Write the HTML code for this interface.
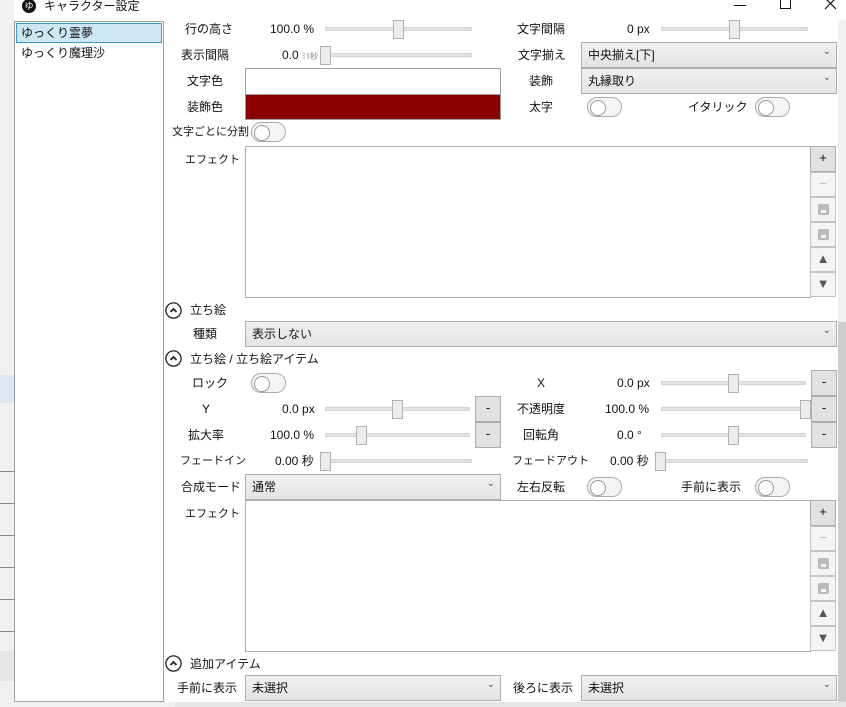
<!DOCTYPE html>
<html><head><meta charset="utf-8">
<style>
*{box-sizing:border-box;margin:0;padding:0}
body{width:846px;height:707px;overflow:hidden;background:#fff;position:relative;font-family:"Liberation Sans","Noto Sans CJK JP",sans-serif;font-size:12px;color:#111}
.a{position:absolute}
.l{position:absolute;line-height:14px;white-space:nowrap}
.tr{position:absolute;height:4px;background:#e2e2e2;border:1px solid #d4d4d4}
.th{position:absolute;width:11px;height:19px;background:#ececec;border:1px solid #b0b0b0}
.cb{position:absolute;height:26px;background:linear-gradient(#f0f0f0,#e4e4e4);border:1px solid #acacac;padding:4px 6px;line-height:16px}
.cb:after{content:"⌄";position:absolute;right:5px;top:1px;font-size:10px;color:#555}
.tg{position:absolute;width:35px;height:20px;border:1px solid #aaa;border-radius:10px;background:#f4f4f4}
.tg:before{content:"";position:absolute;left:2px;top:2px;width:14px;height:14px;border-radius:50%;background:#fff;border:1px solid #999}
.bt{position:absolute;width:26px;height:26px;background:#e1e1e1;border:1px solid #adadad;text-align:center;line-height:22px;font-size:13px}
.bx{position:absolute;border:1px solid #acacac;background:#fff}
.ex{position:absolute;width:17px;height:17px}
.sb{position:absolute;width:26px;height:25px;border:1px solid #c4c4c4;background:#f4f4f4;text-align:center;line-height:22px;color:#bbb;font-size:13px}
.sv{position:absolute;left:7px;top:6px;width:11px;height:11px;background:#bbb;border-radius:1px}
.sv:after{content:"";position:absolute;left:3px;top:6px;width:5px;height:3px;background:#f4f4f4}
</style></head><body>
<div class="a" style="left:0;top:0;width:14px;height:707px;background:#f0f0f0"></div>
<div class="a" style="left:0;top:375px;width:14px;height:28px;background:#dde6f0"></div>
<div class="a" style="left:0;top:471px;width:14px;height:1px;background:#888"></div>
<div class="a" style="left:0;top:503px;width:14px;height:1px;background:#888"></div>
<div class="a" style="left:0;top:535px;width:14px;height:1px;background:#888"></div>
<div class="a" style="left:0;top:567px;width:14px;height:1px;background:#888"></div>
<div class="a" style="left:0;top:599px;width:14px;height:1px;background:#888"></div>
<div class="a" style="left:0;top:631px;width:14px;height:1px;background:#888"></div>
<div class="a" style="left:0;top:651px;width:14px;height:30px;background:#e6e6e6"></div>
<div class="a" style="left:0;top:702px;width:846px;height:5px;background:#f0f0f0"></div>
<div class="a" style="left:175px;top:702px;width:671px;height:5px;background:#e4e4e4"></div>
<div class="a" style="left:14px;top:0;width:832px;height:20px;background:#fff"></div>
<div class="a" style="left:22px;top:-1px;width:14px;height:14px;border-radius:50%;background:#111;color:#fff;font-size:9px;text-align:center;line-height:14px">ゆ</div>
<div class="l" style="left:44px;top:-1px">キャラクター設定</div>
<div class="a" style="left:734px;top:5px;width:12px;height:1px;background:#111"></div>
<div class="a" style="left:780px;top:-1px;width:11px;height:10px;border:1px solid #111"></div>
<svg class="a" style="left:824px;top:-2px" width="13" height="12"><path d="M1 0 L12 11 M12 0 L1 11" stroke="#111" stroke-width="1.2"/></svg>
<div class="a" style="left:14px;top:21px;width:150px;height:681px;border:1px solid #a0a0a0;background:#fff"></div>
<div class="a" style="left:16px;top:23px;width:146px;height:20px;background:#cce8f5;border:1px solid #3c9ad8"></div>
<div class="l" style="left:21px;top:26px">ゆっくり霊夢</div>
<div class="l" style="left:21px;top:46px">ゆっくり魔理沙</div>
<div class="a" style="left:838px;top:20px;width:8px;height:682px;background:#f0f0f0"></div>
<div class="a" style="left:838px;top:322px;width:8px;height:380px;background:#cdcdcd"></div>

<div class="l" style="left:185px;top:22px">行の高さ</div>
<div class="l" style="left:270px;top:22px">100.0 %</div>
<div class="tr" style="left:325px;top:27px;width:147px"></div><div class="th" style="left:393px;top:20px"></div>
<div class="l" style="left:517px;top:22px">文字間隔</div>
<div class="l" style="left:627px;top:22px">0 px</div>
<div class="tr" style="left:661px;top:27px;width:147px"></div><div class="th" style="left:729px;top:20px"></div>
<div class="l" style="left:181px;top:48px">表示間隔</div>
<div class="l" style="left:282px;top:48px">0.0 <span style="font-size:8px;color:#888">ﾐﾘ秒</span></div>
<div class="tr" style="left:320px;top:53px;width:152px"></div><div class="th" style="left:320px;top:46px"></div>
<div class="l" style="left:518px;top:48px">文字揃え</div>
<div class="cb" style="left:581px;top:42px;width:256px">中央揃え[下]</div>
<div class="l" style="left:187px;top:74px">文字色</div>
<div class="a" style="left:245px;top:68px;width:256px;height:27px;border:1px solid #a0a0a0;background:#fff"></div>
<div class="l" style="left:187px;top:100px">装飾色</div>
<div class="a" style="left:245px;top:94px;width:256px;height:26px;border:1px solid #a0a0a0;background:#8b0000"></div>
<div class="l" style="left:529px;top:74px">装飾</div>
<div class="cb" style="left:581px;top:68px;width:256px">丸縁取り</div>
<div class="l" style="left:529px;top:100px">太字</div>
<div class="tg" style="left:587px;top:97px"></div>
<div class="l" style="left:688px;top:100px">イタリック</div>
<div class="tg" style="left:755px;top:97px"></div>
<div class="l" style="left:172px;top:125px;font-size:11px">文字ごとに分割</div>
<div class="tg" style="left:251px;top:122px"></div>
<div class="l" style="left:185px;top:153px;font-size:11px">エフェクト</div>
<div class="bx" style="left:245px;top:146px;width:566px;height:152px"></div>
<div class="bt" style="left:810px;top:146px;height:26px">+</div>
<div class="sb" style="left:810px;top:172px">−</div>
<div class="sb" style="left:810px;top:197px"><div class="sv"></div></div>
<div class="sb" style="left:810px;top:222px"><div class="sv"></div></div>
<div class="sb" style="left:810px;top:247px;color:#555">▲</div>
<div class="sb" style="left:810px;top:272px;color:#555">▼</div>
<svg class="ex" style="left:165px;top:302px" viewBox="0 0 17 17"><circle cx="8.5" cy="8.5" r="7.6" fill="none" stroke="#222" stroke-width="1.3"/><path d="M5.5 10 L8.5 7 L11.5 10" fill="none" stroke="#222" stroke-width="1.8"/></svg>
<div class="l" style="left:190px;top:303px">立ち絵</div>
<div class="l" style="left:193px;top:327px">種類</div>
<div class="cb" style="left:245px;top:321px;width:592px">表示しない</div>
<svg class="ex" style="left:165px;top:350px" viewBox="0 0 17 17"><circle cx="8.5" cy="8.5" r="7.6" fill="none" stroke="#222" stroke-width="1.3"/><path d="M5.5 10 L8.5 7 L11.5 10" fill="none" stroke="#222" stroke-width="1.8"/></svg>
<div class="l" style="left:190px;top:352px">立ち絵 / 立ち絵アイテム</div>
<div class="l" style="left:192px;top:376px">ロック</div>
<div class="tg" style="left:251px;top:373px"></div>
<div class="l" style="left:537px;top:376px">X</div>
<div class="l" style="left:617px;top:376px">0.0 px</div>
<div class="tr" style="left:661px;top:381px;width:145px"></div><div class="th" style="left:728px;top:374px"></div>
<div class="bt" style="left:811px;top:370px">-</div>
<div class="l" style="left:202px;top:402px">Y</div>
<div class="l" style="left:282px;top:402px">0.0 px</div>
<div class="tr" style="left:325px;top:407px;width:145px"></div><div class="th" style="left:392px;top:400px"></div>
<div class="bt" style="left:475px;top:396px">-</div>
<div class="l" style="left:517px;top:402px">不透明度</div>
<div class="l" style="left:605px;top:402px">100.0 %</div>
<div class="tr" style="left:661px;top:407px;width:145px"></div><div class="th" style="left:800px;top:400px"></div>
<div class="bt" style="left:811px;top:396px">-</div>
<div class="l" style="left:188px;top:428px">拡大率</div>
<div class="l" style="left:270px;top:428px">100.0 %</div>
<div class="tr" style="left:325px;top:433px;width:145px"></div><div class="th" style="left:356px;top:426px"></div>
<div class="bt" style="left:475px;top:422px">-</div>
<div class="l" style="left:523px;top:428px">回転角</div>
<div class="l" style="left:617px;top:428px">0.0 °</div>
<div class="tr" style="left:661px;top:433px;width:145px"></div><div class="th" style="left:728px;top:426px"></div>
<div class="bt" style="left:811px;top:422px">-</div>
<div class="l" style="left:180px;top:454px;font-size:11px">フェードイン</div>
<div class="l" style="left:275px;top:454px">0.00 秒</div>
<div class="tr" style="left:320px;top:459px;width:152px"></div><div class="th" style="left:320px;top:452px"></div>
<div class="l" style="left:512px;top:454px;font-size:11px">フェードアウト</div>
<div class="l" style="left:610px;top:454px">0.00 秒</div>
<div class="tr" style="left:655px;top:459px;width:153px"></div><div class="th" style="left:655px;top:452px"></div>
<div class="l" style="left:181px;top:480px">合成モード</div>
<div class="cb" style="left:245px;top:474px;width:256px">通常</div>
<div class="l" style="left:517px;top:480px">左右反転</div>
<div class="tg" style="left:587px;top:477px"></div>
<div class="l" style="left:681px;top:480px">手前に表示</div>
<div class="tg" style="left:755px;top:477px"></div>
<div class="l" style="left:185px;top:507px;font-size:11px">エフェクト</div>
<div class="bx" style="left:245px;top:500px;width:566px;height:152px"></div>
<div class="bt" style="left:810px;top:500px">+</div>
<div class="sb" style="left:810px;top:526px">−</div>
<div class="sb" style="left:810px;top:551px"><div class="sv"></div></div>
<div class="sb" style="left:810px;top:576px"><div class="sv"></div></div>
<div class="sb" style="left:810px;top:601px;color:#555">▲</div>
<div class="sb" style="left:810px;top:626px;color:#555">▼</div>
<svg class="ex" style="left:165px;top:655px" viewBox="0 0 17 17"><circle cx="8.5" cy="8.5" r="7.6" fill="none" stroke="#222" stroke-width="1.3"/><path d="M5.5 10 L8.5 7 L11.5 10" fill="none" stroke="#222" stroke-width="1.8"/></svg>
<div class="l" style="left:190px;top:657px">追加アイテム</div>
<div class="l" style="left:177px;top:681px">手前に表示</div>
<div class="cb" style="left:245px;top:675px;width:256px">未選択</div>
<div class="l" style="left:513px;top:681px">後ろに表示</div>
<div class="cb" style="left:581px;top:675px;width:256px">未選択</div>
</body></html>
